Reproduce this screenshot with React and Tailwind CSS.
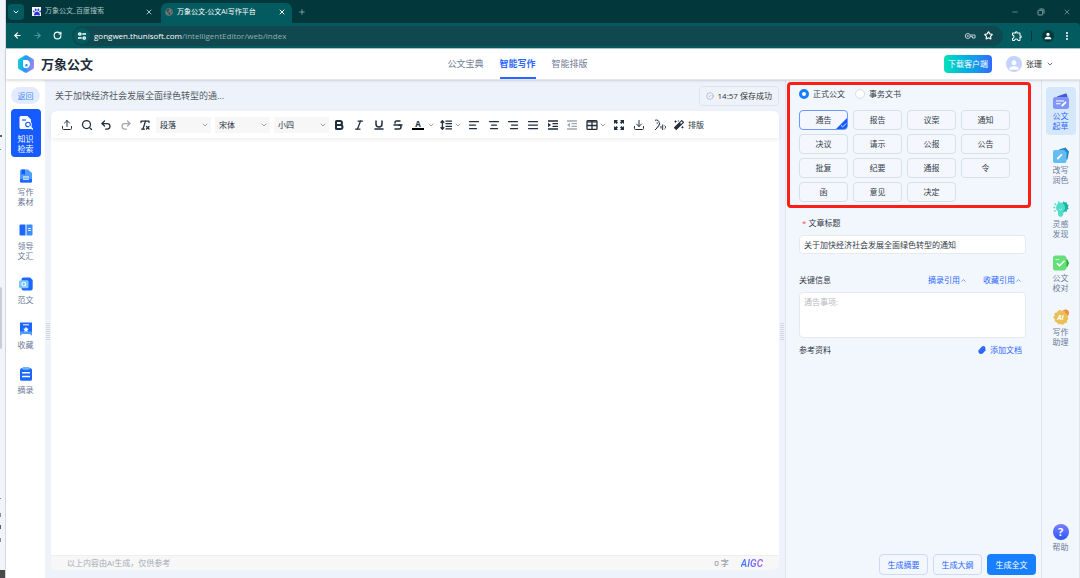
import { useState } from 'react'
import {
  AlignCenter,
  AlignJustify,
  AlignLeft,
  AlignRight,
  ArrowLeft,
  ArrowRight,
  Bold,
  Check,
  ChevronDown,
  ChevronUp,
  CircleCheck,
  Download,
  EllipsisVertical,
  Italic,
  Minus,
  Paperclip,
  Plus,
  Redo2,
  RemoveFormatting,
  RotateCw,
  Search,
  Star,
  Strikethrough,
  Underline,
  Undo2,
  Upload,
  X,
} from 'lucide-react'
import { FaPaw, FaGlobeAmericas, FaMagic } from 'react-icons/fa'
import { MdOutlineExtension, MdPerson } from 'react-icons/md'

const DOC_TYPES = ['通告', '报告', '议案', '通知', '决议', '请示', '公报', '公告', '批复', '纪要', '通报', '令', '函', '意见', '决定']

function SearchDocIcon() {
  return (
    <svg viewBox="0 0 14 14" className="h-3.5 w-3.5">
      <path d="M2 0h6.5L12 3.5V13H2a1.5 1.5 0 0 1-1.5-1.5v-10A1.5 1.5 0 0 1 2 0Z" fill="#fff" />
      <path d="M3 4h4" stroke="#155bff" strokeWidth="1.2" />
      <circle cx="9" cy="8.5" r="3.8" fill="#fff" />
      <circle cx="9" cy="8.5" r="2.3" fill="#fff" stroke="#155bff" strokeWidth="1.1" />
      <path d="m11 10.5 2.4 2.5" stroke="#fff" strokeWidth="1.6" strokeLinecap="round" />
    </svg>
  )
}

function MaterialIcon() {
  return (
    <svg viewBox="0 0 14 14" className="h-3.5 w-3.5">
      <path d="M1 2a1.5 1.5 0 0 1 1.5-1.5H9L13 4v8.5a1 1 0 0 1-1 1H2a1 1 0 0 1-1-1Z" fill="#4f9dff" />
      <path d="M2.5.5H6V6L4.2 4.8 2.5 6Z" fill="#155bff" />
      <path d="M1 10h12v2.5a1 1 0 0 1-1 1H2a1 1 0 0 1-1-1Z" fill="#1c68ff" />
      <path d="M4 8h6M4 10.3h6" stroke="#fff" strokeWidth="1.1" />
    </svg>
  )
}

function BookIcon() {
  return (
    <svg viewBox="0 0 14 14" className="h-3.5 w-3.5">
      <path d="M.5 2.5a1 1 0 0 1 1-1h5v11h-5a1 1 0 0 1-1-1Z" fill="#1c68ff" />
      <path d="M7.5 1.5h5a1 1 0 0 1 1 1v9a1 1 0 0 1-1 1h-5Z" fill="#3b8cff" />
      <path d="M9.2 5.5h2.6M9.2 7.5h2.6" stroke="#fff" strokeWidth="1" />
    </svg>
  )
}

function SampleIcon() {
  return (
    <svg viewBox="0 0 14 14" className="h-3.5 w-3.5">
      <path d="M4.5.5H11L13.7 3v8.5a2 2 0 0 1-2 2H4.5a2 2 0 0 1-2-2v-9a2 2 0 0 1 2-2Z" fill="#1c68ff" />
      <rect x="0" y="3.2" width="9.6" height="8" rx="1.5" fill="#7ec4ff" />
      <circle cx="4.7" cy="7" r="1.9" fill="none" stroke="#fff" />
      <path d="m6 8.4 1.3 1.2" stroke="#fff" />
    </svg>
  )
}

function CollectIcon() {
  return (
    <svg viewBox="0 0 14 14" className="h-3.5 w-3.5">
      <path d="M1 .5h12v13l-2.2-1.7H3.2L1 13.5Z" fill="#1c68ff" />
      <path d="M1 9.5h12v4l-2.2-1.7H3.2L1 13.5Z" fill="#4f9dff" />
      <path d="M4 2.8h6" stroke="#fff" />
      <path d="m7 4.8.9 1.7 1.8.3-1.3 1.4.3 1.9L7 9.2l-1.7.9.3-1.9-1.3-1.4 1.8-.3Z" fill="#fff" />
    </svg>
  )
}

function ExcerptIcon() {
  return (
    <svg viewBox="0 0 14 14" className="h-3.5 w-3.5">
      <rect x="1" y="1.2" width="12" height="12.5" rx="1.5" fill="#1c68ff" />
      <rect x="3.5" y="0" width="7" height="2.8" rx="1" fill="#6bb4ff" />
      <rect x="3" y="5" width="8" height="1.6" rx=".5" fill="#fff" />
      <rect x="3" y="8.7" width="8" height="1.6" rx=".5" fill="#fff" />
    </svg>
  )
}

function DraftIcon() {
  return (
    <svg viewBox="0 0 16 16" className="h-4 w-4">
      <path d="M4 3.5 12.5.5a1 1 0 0 1 1.3.7L15 6H3Z" fill="#4657d9" />
      <rect x="0" y="4" width="16" height="12" rx="2.5" fill="#8094fa" />
      <path d="M3 8h8M3 10.8h4.5" stroke="#fff" strokeWidth="1.1" />
      <path d="m9.3 12.5 3.2-3.2" stroke="#fff" strokeWidth="1.8" strokeLinecap="round" />
    </svg>
  )
}

function PolishIcon() {
  return (
    <svg viewBox="0 0 16 16" className="h-4 w-4">
      <path d="m6 2.5 6.5-2L16 4.5l-1.5 8L8 13Z" fill="#2387c8" />
      <path d="M2 3h9l2.5 2.5V14a2 2 0 0 1-2 2H2a2 2 0 0 1-2-2V5a2 2 0 0 1 2-2Z" fill="#63bdf2" />
      <path d="m4.8 11.5 3.6-3.6" stroke="#fff" strokeWidth="1.8" strokeLinecap="round" />
    </svg>
  )
}

function IdeaIcon() {
  return (
    <svg viewBox="0 0 16 16" className="h-4 w-4">
      <path d="m10.5.3 1.3 1.3 1.9-.3.3 1.9 1.7 1-.8 1.8.8 1.8-1.7 1-.3 1.9-1.9-.3-1.3 1.3-3-6Z" fill="#18b5a4" />
      <path d="M7.5 1.6a5 5 0 0 1 2.7 8.9V14l-1.5 1.8H6.500L5 14v-3.500A5 5 0 0 1 7.500 1.600Z" fill="#4fdccb" />
      <path d="M.3 6.5h2M1.5 2.5l1.6 1.3M5.5.3l.5 1.7M1 10.500l1.800-1" stroke="#4fdccb" strokeWidth="1.3" />
      <path d="m5.800 8 1.700 1.200L9.200 8" stroke="#bff7ef" strokeWidth=".8" fill="none" />
    </svg>
  )
}

function ProofIcon() {
  return (
    <svg viewBox="0 0 16 16" className="h-4 w-4">
      <path d="M12 4 14.5 4.5 16 8l-1.5 3.800L12 12.500Z" fill="#22ae3c" />
      <path d="M2.5.5h9l2 2v11l-2 2h-9A2.5 2.5 0 0 1 0 13V3A2.5 2.5 0 0 1 2.5.5Z" fill="#64e078" />
      <path d="M2.5 4.5h4" stroke="#c9f9cf" />
      <path d="m4 8.3 2.5 2.5 5-5" fill="none" stroke="#fff" strokeWidth="1.5" />
    </svg>
  )
}

function AssistantIcon() {
  return (
    <svg viewBox="0 0 16 16" className="h-4 w-4">
      <circle cx="12.5" cy="4" r="3.5" fill="#f08b45" />
      <path d="m7.500 1 1.800 1.300 2.300-.2.800 2.200 2.100 1-.2 2.300 1.200 1.900-1.400 1.900-.2 2.300-2.300.5-1.700 1.700-2.300-.9-2.300.5-1.300-2-2.300-.9.100-2.400L.2 8.400l1.300-2 .1-2.300 2.300-.7 1.400-1.900Z" fill="#ecbf55" />
      <text x="7.5" y="11" textAnchor="middle" fontSize="7" fontWeight="700" fontStyle="italic" fill="#fff">AI</text>
    </svg>
  )
}

function Logo() {
  return (
    <svg viewBox="0 0 18 18" className="h-[18px] w-[18px]">
      <defs>
        <linearGradient id="logo" x1="0" y1="0.4" x2="1" y2="0.6">
          <stop offset="0" stopColor="#12cfd8" />
          <stop offset="0.45" stopColor="#1e9df2" />
          <stop offset="1" stopColor="#a884f5" />
        </linearGradient>
      </defs>
      <path d="M7.8.5a2.4 2.4 0 0 1 2.4 0l5.6 3.2A2.4 2.4 0 0 1 17 5.8v6.4a2.4 2.4 0 0 1-1.2 2.1l-5.6 3.2a2.4 2.4 0 0 1-2.4 0l-5.6-3.2A2.4 2.4 0 0 1 1 12.2V5.8a2.4 2.4 0 0 1 1.2-2.1Z" fill="url(#logo)" />
      <path d="M6 5h3.2c2.200 0 3.800 1.700 3.800 4s-1.800 4.200-4 4.200c-2 0-3-1.200-3-3Z" fill="#fff" />
      <path d="M8.300 11.500v-1.300a1.200 1.200 0 1 1 1.200 1.300Z" fill="#2f86ee" />
    </svg>
  )
}

function TuneIcon() {
  return (
    <svg viewBox="0 0 10 10" className="h-2.5 w-2.5" fill="none" stroke="currentColor" strokeWidth="1.3">
      <circle cx="2.8" cy="3" r="1.2" />
      <path d="M5.3 3H9M1 7h3.7" />
      <circle cx="7.2" cy="7" r="1.2" />
    </svg>
  )
}

function KeyIcon() {
  return (
    <svg viewBox="0 0 12 10" className="h-2.5 w-3" fill="none" stroke="currentColor">
      <circle cx="3.8" cy="5" r="2.5" />
      <circle cx="3.8" cy="5" r=".6" />
      <path d="M6.3 4H11v3H8.5V5.5H6.3" />
    </svg>
  )
}

function RestoreIcon() {
  return (
    <svg viewBox="0 0 8 8" className="h-2 w-2" fill="none" stroke="currentColor" strokeWidth=".9">
      <rect x="1" y="2.3" width="4.7" height="4.7" rx=".6" />
      <path d="M2.5 1H6a1 1 0 0 1 1 1v3.5" />
    </svg>
  )
}

function VoiceIcon() {
  return (
    <svg viewBox="0 0 12 12" className="h-3 w-3" fill="none" stroke="currentColor">
      <path d="M1 1.300c2.500-.8 4.200.3 4 2.300l.9 1.600-1.100.5V7c0 .7-.6 1-1.700.9v1L1 11M2.800 3.500c.8 0 .8 1 0 1.300" />
      <path d="M7 7v2.500M8.700 5.500V11M10.500 6.500a2 2 0 0 1 0 3.500" />
    </svg>
  )
}

function LineHeightIcon() {
  return (
    <svg viewBox="0 0 12 12" className="h-3 w-3" fill="none" stroke="currentColor" strokeWidth="1.3">
      <path d="M5.5 2.2H12M5.5 4.7H12M5.5 7.3H12M5.5 9.8H12" />
      <path d="M2.4 2v8M.6 3.700l1.800-2 1.800 2M.6 8.300l1.800 2 1.800-2" />
    </svg>
  )
}

function IndentIcon({ outdent }) {
  return (
    <svg viewBox="0 0 12 12" className="h-3 w-3">
      <path d="M1 2h10M5.5 4.7H11M5.5 7.3H11M1 10h10" stroke="currentColor" strokeWidth="1.3" />
      <path d={outdent ? 'M4 3.8v4.4L1 6Z' : 'M1 3.8v4.4L4 6Z'} fill="currentColor" />
    </svg>
  )
}

function TableIcon() {
  return (
    <svg viewBox="0 0 12 12" className="h-3 w-3" fill="none" stroke="currentColor" strokeWidth="1.3">
      <rect x="1" y="1.6" width="10" height="8.8" rx="1" />
      <path d="M1 2.8h10M1 6.5h10M6 2v8" />
    </svg>
  )
}

function FullscreenIcon() {
  return (
    <svg viewBox="0 0 12 12" className="h-3 w-3" fill="currentColor">
      <path d="M1 1h4L3.8 2.3l1.2 1.2L3.5 5 2.3 3.8 1 5ZM11 1v4L9.7 3.8 8.5 5 7 3.5l1.2-1.2L7 1ZM11 11H7l1.2-1.3L7 8.5 8.5 7l1.2 1.2L11 7ZM1 11V7l1.3 1.2L3.5 7 5 8.5 3.8 9.7 5 11Z" />
    </svg>
  )
}

const LEFT_ITEMS = [
  { lines: ['写作', '素材'], Icon: MaterialIcon },
  { lines: ['领导', '文汇'], Icon: BookIcon },
  { lines: ['范文'], Icon: SampleIcon },
  { lines: ['收藏'], Icon: CollectIcon },
  { lines: ['摘录'], Icon: ExcerptIcon },
]

const RIGHT_ITEMS = [
  { lines: ['改写', '润色'], Icon: PolishIcon },
  { lines: ['灵感', '发现'], Icon: IdeaIcon },
  { lines: ['公文', '校对'], Icon: ProofIcon },
  { lines: ['写作', '助理'], Icon: AssistantIcon },
]

function Lines({ lines }) {
  return (
    <span className="flex flex-col">
      {lines.map((l) => (
        <span key={l}>{l}</span>
      ))}
    </span>
  )
}

function BrowserChrome() {
  return (
    <div className="shrink-0 border-b border-[#a9c9ca] bg-[#02383c] text-[7px] text-[#a9c3c4]">
      <div className="flex h-[23px] items-center">
        <button type="button" aria-label="Tabs" className="ml-[2px] flex h-4 w-4 items-center justify-center rounded bg-[#045b5f] text-white">
          <ChevronDown className="h-2 w-2" strokeWidth={3} />
        </button>
        <div className="ml-2 flex w-[121px] items-center gap-1">
          <span className="flex h-[9px] w-[9px] items-center justify-center bg-white text-[#2932e1]">
            <FaPaw className="h-2 w-2" />
          </span>
          <span className="flex-1">万象公文_百度搜索</span>
          <button type="button" aria-label="关闭标签">
            <X className="h-2 w-2" strokeWidth={3} />
          </button>
        </div>
        <div className="ml-2 flex h-full items-end">
          <div className="flex h-5 w-[131px] items-center gap-1 rounded-t-md bg-[#045b5f] pb-[2px] pl-1 pr-1.5 text-white">
            <FaGlobeAmericas className="h-2 w-2 text-[#7d7273]" />
            <span className="flex-1 whitespace-nowrap">万象公文-公文AI写作平台</span>
            <button type="button" aria-label="关闭标签">
              <X className="h-2 w-2" strokeWidth={3} />
            </button>
          </div>
        </div>
        <button type="button" aria-label="新标签" className="ml-1.5">
          <Plus className="h-2 w-2" />
        </button>
        <div className="ml-auto flex items-center gap-[18px] pr-[9px] text-[#8fa9aa]">
          <Minus className="h-2 w-2" />
          <RestoreIcon />
          <X className="h-2 w-2" />
        </div>
      </div>
      <div className="flex h-[25px] items-center rounded-tr bg-[#045b5f] pl-[7px] text-white">
        <div className="flex items-center gap-[11px]">
          <ArrowLeft className="h-[9px] w-[9px]" strokeWidth={3} />
          <ArrowRight className="h-[9px] w-[9px] text-[#4f9396]" strokeWidth={3} />
          <RotateCw className="h-[9px] w-[9px]" strokeWidth={3} />
        </div>
        <div className="ml-2.5 flex h-5 flex-1 items-center rounded-full bg-[#0f484e] pl-[2px] pr-2.5">
          <span className="flex h-4 w-4 items-center justify-center rounded-full bg-[#045b5f]">
            <TuneIcon />
          </span>
          <span className="ml-1 flex-1 text-[8px] text-[#92b0b1]">
            <span className="text-white">gongwen.thunisoft.com</span>/IntelligentEditor/web/index
          </span>
          <span className="text-[#bcd0d1]"><KeyIcon /></span>
          <Star className="ml-2 h-[9px] w-[9px]" strokeWidth={3} />
        </div>
        <MdOutlineExtension className="ml-2 h-3 w-3" />
        <span className="ml-2 h-2.5 w-px bg-[#02383c]" />
        <span className="ml-2.5 flex h-3 w-3 items-center justify-center rounded-full bg-[#02383c]">
          <MdPerson className="h-2.5 w-2.5" />
        </span>
        <EllipsisVertical className="mx-2 h-2.5 w-2.5" strokeWidth={3} />
      </div>
    </div>
  )
}

function Header() {
  return (
    <header className="z-10 flex h-[31px] shrink-0 items-center border-b border-[#e3e7ed] bg-white shadow-sm">
      <div className="flex flex-1 items-center gap-1.5 pl-[11px]">
        <Logo />
        <h1 className="text-[13px] font-bold leading-4 text-[#222b3a]">万象公文</h1>
      </div>
      <nav className="mr-9 flex h-full gap-4 text-[9px] text-[#6f7b95]">
        <a href="#library" className="flex items-center border-y-2 border-transparent">公文宝典</a>
        <a href="#write" className="flex items-center border-y-2 border-t-transparent border-b-[#2b66ff] font-bold text-[#2b66ff]">智能写作</a>
        <a href="#layout" className="flex items-center border-y-2 border-transparent">智能排版</a>
      </nav>
      <div className="flex flex-1 items-center justify-end pr-[26px]">
        <button type="button" className="h-[18px] w-12 whitespace-nowrap rounded bg-gradient-to-r from-[#0be0ba] to-[#2f6bff] text-[8px] text-white">
          下载客户端
        </button>
        <span className="ml-3.5 flex h-4 w-4 items-end justify-center overflow-hidden rounded-full bg-[#c3d3fa] text-white">
          <MdPerson className="h-3.5 w-3.5" />
        </span>
        <button type="button" className="ml-1 flex items-center gap-1 text-[8px] text-[#333]">
          张珊
          <ChevronDown className="h-2 w-2" />
        </button>
      </div>
    </header>
  )
}

function LeftNav() {
  return (
    <aside className="flex w-[39px] shrink-0 flex-col items-center rounded-tr bg-white pt-[7px] text-[8px] leading-[10px] text-[#6b7a99]">
      <button type="button" className="h-[17px] w-[29px] rounded-full bg-[#e3ecff] text-[#4b8bff]">返回</button>
      <button type="button" className="mt-[5px] flex h-12 w-[30px] flex-col items-center gap-1 rounded bg-[#155bff] pt-[7px] text-white">
        <SearchDocIcon />
        <Lines lines={['知识', '检索']} />
      </button>
      <div className="mt-3 flex flex-col gap-4">
        {LEFT_ITEMS.map(({ lines, Icon }) => (
          <button key={lines[0]} type="button" className="flex min-h-[29px] flex-col items-center gap-1">
            <Icon />
            <Lines lines={lines} />
          </button>
        ))}
      </div>
    </aside>
  )
}

function Splitter() {
  return (
    <div className="flex w-1.5 shrink-0 flex-col items-center justify-center gap-px pt-1">
      {[0, 1, 2, 3, 4, 5, 6, 7, 8].map((i) => (
        <span key={i} className="h-px w-1 bg-[#d2d7e0]" />
      ))}
    </div>
  )
}

function ToolButton({ label, muted, children }) {
  return (
    <button type="button" aria-label={label} className={muted ? 'text-[#a3a8b0]' : 'text-[#222f3e]'}>
      {children}
    </button>
  )
}

function FormatSelect({ label, value }) {
  return (
    <div className="relative">
      <select aria-label={label} className="block h-4 w-[55px] appearance-none bg-[#f7f7f7] pl-1 text-[8px] leading-4 text-[#222f3e]">
        <option>{value}</option>
      </select>
      <ChevronDown className="pointer-events-none absolute right-[2px] top-1 h-2 w-2 text-[#8a919b]" strokeWidth={2.5} />
    </div>
  )
}

function Toolbar() {
  const ic = 'h-3 w-3'
  const chev = <ChevronDown className="h-2 w-2 shrink-0 text-[#8a919b]" strokeWidth={2.5} />
  return (
    <div className="z-10 flex h-[27px] shrink-0 items-center rounded-t-md bg-white pl-2.5 shadow-[0_2px_4px_rgba(34,47,62,0.08)]">
      <div className="flex w-[90px] justify-between">
        <ToolButton label="导入"><Upload className={ic} /></ToolButton>
        <ToolButton label="查找"><Search className={ic} strokeWidth={2.5} /></ToolButton>
        <ToolButton label="撤销"><Undo2 className={ic} strokeWidth={2.5} /></ToolButton>
        <ToolButton label="重做" muted><Redo2 className={ic} strokeWidth={2.5} /></ToolButton>
        <ToolButton label="清除格式"><RemoveFormatting className={ic} strokeWidth={2.5} /></ToolButton>
      </div>
      <div className="ml-[5px] flex gap-1">
        <FormatSelect label="段落" value="段落" />
        <FormatSelect label="字体" value="宋体" />
        <FormatSelect label="字号" value="小四" />
      </div>
      <div className="ml-1 flex w-[91px] items-center justify-between">
        <ToolButton label="加粗"><Bold className={ic} strokeWidth={4} /></ToolButton>
        <ToolButton label="斜体"><Italic className={ic} strokeWidth={2.5} /></ToolButton>
        <ToolButton label="下划线"><Underline className={ic} strokeWidth={3} /></ToolButton>
        <ToolButton label="删除线"><Strikethrough className={ic} strokeWidth={3} /></ToolButton>
        <ToolButton label="字体颜色">
          <span className="flex h-2.5 w-3 items-center justify-center border-b-2 border-black text-[8px] font-bold leading-none">A</span>
        </ToolButton>
      </div>
      <span className="ml-[3px]">{chev}</span>
      <div className="ml-[5px] flex items-center gap-[2px]">
        <ToolButton label="行高"><LineHeightIcon /></ToolButton>
        {chev}
      </div>
      <div className="ml-1.5 flex w-[130px] items-center justify-between">
        <ToolButton label="左对齐"><AlignLeft className={ic} strokeWidth={2.5} /></ToolButton>
        <ToolButton label="居中"><AlignCenter className={ic} strokeWidth={2.5} /></ToolButton>
        <ToolButton label="右对齐"><AlignRight className={ic} strokeWidth={2.5} /></ToolButton>
        <ToolButton label="两端对齐"><AlignJustify className={ic} strokeWidth={2.5} /></ToolButton>
        <ToolButton label="增加缩进"><IndentIcon /></ToolButton>
        <ToolButton label="减少缩进" muted><IndentIcon outdent /></ToolButton>
        <ToolButton label="表格"><TableIcon /></ToolButton>
      </div>
      <span className="ml-px">{chev}</span>
      <div className="ml-1.5 flex w-[71px] items-center justify-between">
        <ToolButton label="全屏"><FullscreenIcon /></ToolButton>
        <ToolButton label="下载"><Download className={ic} /></ToolButton>
        <ToolButton label="朗读"><VoiceIcon /></ToolButton>
        <ToolButton label="智能"><FaMagic className="h-2.5 w-2.5" /></ToolButton>
      </div>
      <button type="button" className="ml-1 text-[8px] text-[#222f3e]">排版</button>
    </div>
  )
}

function Editor() {
  return (
    <main className="flex min-w-0 flex-1 flex-col pb-2">
      <div className="flex h-[31px] shrink-0 items-center justify-between pl-1">
        <h2 className="text-[9px] text-[#555b66]">关于加快经济社会发展全面绿色转型的通...</h2>
        <div className="flex h-5 items-center gap-1 rounded border border-[#e0e5ed] px-1.5 text-[8px] text-[#333]">
          <CircleCheck className="h-2 w-2 text-[#a5abb5]" />
          14:57 保存成功
        </div>
      </div>
      <Toolbar />
      <div role="textbox" contentEditable suppressContentEditableWarning aria-label="正文" className="flex-1 bg-white outline-none" />
      <footer className="flex h-[15px] shrink-0 items-center rounded-b-md border-t border-[#eeeeee] bg-[#f7f7f7] px-4 text-[8px] text-[#a3abb8]">
        <span>以上内容由AI生成，仅供参考</span>
        <span className="ml-auto text-[#7c8390]">0 字</span>
        <span className="ml-3 bg-gradient-to-r from-[#1f7bff] to-[#9a5cf5] bg-clip-text font-['Roboto',sans-serif] text-[10px] font-semibold italic text-transparent">AIGC</span>
      </footer>
    </main>
  )
}

function DraftPanel() {
  const [kind, setKind] = useState('正式公文')
  const [type, setType] = useState('通告')
  return (
    <section className="flex w-[257px] shrink-0 flex-col border-l border-r border-[#dfe5ee] bg-[#f2f7fe] text-[8px] text-[#333a47]">
      <div className="ml-px mr-2.5 mt-[2px] rounded-sm border-[3px] border-[#fb1f17] px-[9px] pb-[3px] pt-px">
        <div className="flex h-4 items-center gap-2.5">
          {['正式公文', '事务文书'].map((k) => (
            <label key={k} className="flex items-center gap-1">
              <input
                type="radio"
                name="kind"
                checked={kind === k}
                onChange={() => setKind(k)}
                className="h-[10px] w-[10px] appearance-none rounded-full border border-[#d9dde4] bg-white checked:border-[3px] checked:border-[#1880ff]"
              />
              {k}
            </label>
          ))}
        </div>
        <div className="mt-2 flex flex-wrap gap-x-[5px] gap-y-1">
          {DOC_TYPES.map((t) => (
            <button
              key={t}
              type="button"
              onClick={() => setType(t)}
              className={
                t === type
                  ? 'relative h-5 w-[49px] overflow-hidden rounded-sm border border-[#6d96ff] bg-[#f4f8fe]'
                  : 'h-5 w-[49px] rounded-sm border border-[#d8deea] bg-[#f4f8fe]'
              }
            >
              {t}
              {t === type && (
                <span className="absolute bottom-0 right-0 flex h-[11px] w-[11px] items-end justify-end bg-[#155bff] text-white [clip-path:polygon(100%_0,100%_100%,0_100%)]">
                  <Check className="h-[7px] w-[7px]" strokeWidth={3} />
                </span>
              )}
            </button>
          ))}
        </div>
      </div>
      <div className="pl-[13px] pr-[15px]">
        <label htmlFor="title" className="mt-[7px] flex h-4 items-center gap-[2px] pl-[3px]">
          <span className="text-[#ff4d4f]">*</span>
          文章标题
        </label>
        <input
          id="title"
          defaultValue="关于加快经济社会发展全面绿色转型的通知"
          className="mt-1 block h-[19px] w-full rounded-sm border border-[#e6eaf0] bg-white px-1"
        />
        <div className="mt-[18px] flex h-4 items-center">
          <label htmlFor="info" className="flex-1">关键信息</label>
          <button type="button" className="flex items-center text-[#2b66ff]">
            摘录引用
            <ChevronUp className="h-[7px] w-[7px]" />
          </button>
          <button type="button" className="ml-4 mr-1 flex items-center text-[#2b66ff]">
            收藏引用
            <ChevronUp className="h-[7px] w-[7px]" />
          </button>
        </div>
        <textarea
          id="info"
          placeholder="通告事项:"
          className="mt-1 block h-[46px] w-full resize-none rounded-sm border border-[#e6eaf0] bg-white px-1 py-[3px] placeholder:text-[#b5bac3]"
        />
        <div className="mt-1 flex h-4 items-center justify-between pr-1">
          <span>参考资料</span>
          <button type="button" className="flex items-center gap-1 text-[#2b66ff]">
            <Paperclip className="h-2 w-2" strokeWidth={4} />
            添加文档
          </button>
        </div>
      </div>
      <div className="mb-[3px] mr-[5px] mt-auto flex justify-end gap-[5px]">
        <button type="button" className="h-[21px] w-[49px] rounded-sm border border-[#cdd9f5] text-[#2b66ff]">生成摘要</button>
        <button type="button" className="h-[21px] w-[49px] rounded-sm border border-[#cdd9f5] text-[#2b66ff]">生成大纲</button>
        <button type="button" className="h-[21px] w-[49px] rounded-sm bg-[#1880ff] text-white">生成全文</button>
      </div>
    </section>
  )
}

function RightRail() {
  return (
    <aside className="flex w-[38px] shrink-0 flex-col items-center border-r border-[#dfe5ee] bg-[#f2f7fe] pt-[7px] text-[8px] leading-[10px] text-[#6b7a99]">
      <button type="button" className="flex h-12 w-[30px] flex-col items-center gap-[2px] rounded bg-[#d5e7fa] pt-1.5 text-[#2b66ff]">
        <DraftIcon />
        <Lines lines={['公文', '起草']} />
      </button>
      <div className="mt-3 flex flex-col gap-4">
        {RIGHT_ITEMS.map(({ lines, Icon }) => (
          <button key={lines.join('')} type="button" className="flex flex-col items-center gap-[2px]">
            <Icon />
            <Lines lines={lines} />
          </button>
        ))}
      </div>
      <button type="button" className="mb-[26px] mt-auto flex flex-col items-center gap-[2px]">
        <span className="flex h-4 w-4 items-center justify-center rounded-full bg-gradient-to-b from-[#7a7dff] to-[#2756f5] text-[11px] font-bold text-white">?</span>
        帮助
      </button>
    </aside>
  )
}

// Sliver of the page that lies behind the browser window
function Backdrop() {
  return (
    <div className="relative w-[6px] shrink-0 overflow-hidden border-r border-[#d3d8df] bg-[#f1f4f8]">
      <span className="absolute left-0 top-[135px] h-[2px] w-[2px] bg-[#5a5f66]" />
      <span className="absolute left-0 top-[149px] h-px w-px bg-[#8a8f96]" />
      <span className="absolute left-0 top-[287px] h-[62px] w-[2px] rounded-r bg-[#c9cdd6]" />
      <span className="absolute bottom-[79px] left-0 h-px w-px bg-[#8a8f96]" />
      <span className="absolute bottom-[61px] left-0 h-1 w-px bg-[#8a8f96]" />
      <span className="absolute bottom-[49px] left-0 h-1 w-px bg-[#5a5f66]" />
      <span className="absolute bottom-[36px] left-0 h-1 w-px bg-[#8a8f96]" />
      <span className="absolute bottom-0 left-0 h-2 w-[5px] bg-[#4a4a4a]" />
    </div>
  )
}

export default function App() {
  return (
    <div className="flex h-screen bg-[#eef3fb] font-['Open_Sans','Noto_Sans_CJK_SC',sans-serif]">
      <Backdrop />
      <div className="flex min-w-0 flex-1 flex-col">
        <BrowserChrome />
        <Header />
        <div className="flex min-h-0 flex-1">
          <LeftNav />
          <Splitter />
          <Editor />
          <Splitter />
          <DraftPanel />
          <RightRail />
        </div>
      </div>
    </div>
  )
}
